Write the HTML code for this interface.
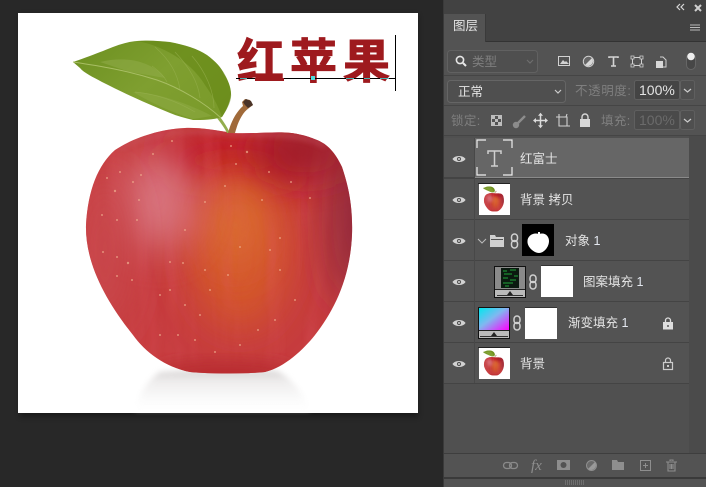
<!DOCTYPE html>
<html><head><meta charset="utf-8"><style>
html,body{margin:0;padding:0;background:#282828;width:706px;height:487px;overflow:hidden}
svg{display:block}
.t{font-family:"Liberation Sans","WenQuanYi Zen Hei","Noto Sans CJK SC",sans-serif;font-size:12.5px;fill:#e4e4e4}
.d{fill:#7f7f7f}
.dim{fill:none;stroke:#8a8a8a;stroke-width:1.3}
</style></head><body>
<svg width="706" height="487" viewBox="0 0 706 487" xmlns="http://www.w3.org/2000/svg">
<defs>
<clipPath id="ac"><path d="M232 133C215 130 200 127.500 185 128C160 129 133 138 115 150C98 165 88 190 86 225C85 262 105 300 133 335C145 352 165 367 190 372C210 374 245 374 265 372C285 367 303 350 315 335C333 312 350 280 352 235C353 205 348 185 342 167C335 152 327 144 317 140C305 135 295 133 285 132.500C265 132 250 134 232 133Z"/></clipPath>
<filter id="b6" x="-30%" y="-30%" width="160%" height="160%"><feGaussianBlur stdDeviation="7"/></filter>
<filter id="b14" x="-80%" y="-80%" width="260%" height="260%"><feGaussianBlur stdDeviation="20"/></filter>
<filter id="b3" x="-30%" y="-30%" width="160%" height="160%"><feGaussianBlur stdDeviation="3"/></filter>
<filter id="st" x="0" y="0" width="100%" height="100%"><feTurbulence type="fractalNoise" baseFrequency="0.06 0.008" numOctaves="3" seed="5"/><feColorMatrix values="0 0 0 0 .74  0 0 0 0 .1  0 0 0 0 .13  1.6 0 0 0 -.62"/><feGaussianBlur stdDeviation="1"/></filter>
<linearGradient id="lf" x1="0" y1="0.2" x2="1" y2="0.8"><stop offset="0" stop-color="#6f9222"/><stop offset=".5" stop-color="#7f9f30"/><stop offset="1" stop-color="#7a9a2a"/></linearGradient>
<linearGradient id="gr" x1="0" y1="0" x2="1" y2="1"><stop offset="0" stop-color="#00e8ee"/><stop offset=".45" stop-color="#80b8f0"/><stop offset="1" stop-color="#ff00ff"/></linearGradient>
<linearGradient id="sh" x1="0" y1="0" x2="0" y2="1"><stop offset="0" stop-color="#c4c0c0"/><stop offset=".3" stop-color="#e8e6e6"/><stop offset=".75" stop-color="#fafafa"/><stop offset="1" stop-color="#fff"/></linearGradient>
<g id="apple">
<path d="M232 133C215 130 200 127.500 185 128C160 129 133 138 115 150C98 165 88 190 86 225C85 262 105 300 133 335C145 352 165 367 190 372C210 374 245 374 265 372C285 367 303 350 315 335C333 312 350 280 352 235C353 205 348 185 342 167C335 152 327 144 317 140C305 135 295 133 285 132.500C265 132 250 134 232 133Z" fill="#c63c3e"/>
<g clip-path="url(#ac)">
<ellipse cx="235" cy="160" rx="85" ry="26" fill="#bd1420" filter="url(#b14)"/>
<ellipse cx="240" cy="250" rx="50" ry="80" fill="#d4562a" filter="url(#b14)"/>
<ellipse cx="235" cy="225" rx="24" ry="40" fill="#dc7030" filter="url(#b14)"/>
<rect x="80" y="125" width="280" height="250" filter="url(#st)" opacity=".4"/>
<ellipse cx="158" cy="200" rx="36" ry="50" fill="#dc818c" filter="url(#b14)" opacity=".85"/>
<ellipse cx="105" cy="250" rx="22" ry="80" fill="#c9484d" filter="url(#b14)"/>
<ellipse cx="352" cy="215" rx="20" ry="90" fill="#862838" filter="url(#b14)"/>
<ellipse cx="305" cy="150" rx="50" ry="24" fill="#9a1c2a" filter="url(#b14)"/>
<path d="M120 148C150 132 195 128 232 134C262 135 300 132 325 146" fill="none" stroke="#c8606a" stroke-width="3" opacity=".6" filter="url(#b3)"/>
<ellipse cx="225" cy="372" rx="70" ry="12" fill="#ba2e30" filter="url(#b6)"/>
<g fill="#f0b090" opacity=".7">
<circle cx="172" cy="141" r="1"/><circle cx="153" cy="154" r="1"/><circle cx="247" cy="152" r="1.200"/><circle cx="231" cy="146" r="1"/><circle cx="236" cy="164" r="1"/><circle cx="225" cy="186" r="1"/><circle cx="205" cy="202" r="1"/><circle cx="269" cy="172" r="1"/><circle cx="291" cy="182" r="1"/><circle cx="120" cy="172" r="1"/><circle cx="133" cy="182" r="1"/><circle cx="107" cy="178" r="1"/><circle cx="115" cy="191" r="1.200"/><circle cx="141" cy="175" r="1"/><circle cx="139" cy="200" r="1"/><circle cx="102" cy="215" r="1"/><circle cx="117" cy="220" r="1"/><circle cx="137" cy="220" r="1"/><circle cx="103" cy="252" r="1"/><circle cx="117" cy="257" r="1"/><circle cx="128" cy="263" r="1.200"/><circle cx="117" cy="276" r="1"/><circle cx="132" cy="280" r="1"/><circle cx="160" cy="295" r="1"/><circle cx="170" cy="290" r="1"/><circle cx="185" cy="305" r="1"/><circle cx="200" cy="315" r="1"/><circle cx="160" cy="335" r="1"/><circle cx="178" cy="335" r="1"/><circle cx="195" cy="340" r="1"/><circle cx="215" cy="352" r="1"/><circle cx="240" cy="345" r="1"/><circle cx="258" cy="330" r="1"/><circle cx="275" cy="320" r="1"/><circle cx="295" cy="300" r="1"/><circle cx="280" cy="270" r="1"/><circle cx="270" cy="250" r="1"/><circle cx="280" cy="238" r="1"/><circle cx="240" cy="247" r="1"/><circle cx="210" cy="290" r="1"/><circle cx="205" cy="270" r="1"/><circle cx="228" cy="275" r="1"/><circle cx="310" cy="198" r="1"/><circle cx="262" cy="200" r="1"/><circle cx="183" cy="263" r="1"/><circle cx="170" cy="262" r="1"/><circle cx="185" cy="230" r="1"/>
</g>
</g>
<path d="M220 117C224 122 227 127 230 133L227 133C224 127 220 122 217 118Z" fill="#93ad4e"/>
<path d="M228 133C231 122 236 112 243 106L242 102L245 99L250 100L253 105L249 108C242 113 238 122 235 133Z" fill="#a06a3a"/>
<path d="M243 102L246 99L251 101L253 105L248 108L245 105Z" fill="#4a3428"/>
<path d="M73 62C85 58 95 54 103 51C115 46 125 42 137 41C150 40 160 41 170 42C185 45 198 49 207 55C216 62 221 67 224 74C228 80 231 87 231 94C230 103 226 111 222 117C213 120 203 120 193 120C185 118 177 116 170 113C158 108 146 103 133 97C122 92 112 87 102 82C93 77 84 73 80 68Z" fill="url(#lf)"/>
<path d="M137 41C160 45 190 60 205 85C212 95 218 105 222 117C228 108 232 100 231 93C230 85 226 75 222 70C215 60 205 52 190 47C175 42 155 40 137 41Z" fill="#628512" opacity=".55"/>
<path d="M100 62C125 56 150 60 165 78L130 72Z" fill="#8fab48" opacity=".55"/>
<path d="M133 92C155 92 190 104 212 116L193 119C170 112 150 102 133 92Z" fill="#8fac46" opacity=".5"/>
<path d="M73 62C100 66 125 70 157 80C180 88 205 103 221 118" fill="none" stroke="#a8be64" stroke-width="1"/>
<path d="M152 66C160 72 164 76 167 82M180 90C178 75 170 60 155 47M200 98C198 82 190 68 175 52M214 108C214 92 206 72 192 56M135 92C155 94 175 100 195 112" fill="none" stroke="#9ab252" stroke-width=".7" opacity=".6"/>
</g>
</defs>

<rect width="706" height="487" fill="#282828"/>
<rect x="20" y="15" width="398" height="402" fill="#000" opacity=".35" filter="url(#b3)"/>
<rect x="18" y="13" width="400" height="400" fill="#fff"/>
<path d="M160 372C195 369 250 369 277 371C292 378 304 395 310 410L135 410C140 392 148 380 160 372Z" fill="url(#sh)" filter="url(#b3)" opacity=".7"/>
<use href="#apple"/>
<text x="237" y="78" font-family="'Noto Sans CJK SC','WenQuanYi Zen Hei',sans-serif" font-weight="700" font-size="47" letter-spacing="6" fill="#9e1a1e" stroke="#9e1a1e" stroke-width="1">红苹果</text>
<rect x="236" y="78" width="160" height="1" fill="#000"/>
<rect x="395" y="35" width="1" height="56" fill="#000"/>
<path d="M240 78h7M346 78h8M364 78h6M380 78h9" stroke="#5fe0e0" stroke-width="1" opacity=".8" transform="translate(0 .5)"/>
<rect x="255" y="78" width="29" height="3" fill="#9e1a1e"/>
<rect x="311" y="76" width="4" height="4" fill="#4fdcdc"/>

<rect x="443" y="0" width="263" height="487" fill="#535353"/>
<rect x="443" y="0" width="1" height="487" fill="#3a3a3a"/>
<rect x="444" y="0" width="262" height="14" fill="#424242"/>
<path d="M680 4l-3 3 3 3M684 4l-3 3 3 3" fill="none" stroke="#d8d8d8" stroke-width="1.200"/>
<path d="M695 5l6 6M701 5l-6 6" stroke="#cfcfcf" stroke-width="2"/>
<rect x="444" y="14" width="262" height="28" fill="#424242"/>
<rect x="444" y="14" width="41" height="28" fill="#535353"/>
<rect x="485" y="41" width="221" height="1" fill="#333"/>
<rect x="485" y="14" width="1" height="28" fill="#3a3a3a"/>
<text x="453" y="30" class="t">图层</text>
<path d="M690 25h10M690 27.500h10M690 30h10" stroke="#bbb" stroke-width="1"/>

<rect x="447.500" y="50.500" width="90" height="22" rx="3" fill="#4f4f4f" stroke="#616161"/>
<circle cx="460" cy="60" r="3.600" fill="none" stroke="#e6e6e6" stroke-width="1.600"/><path d="M463 63l3 3" stroke="#e6e6e6" stroke-width="2"/>
<text x="472" y="66" class="t d">类型</text>
<path d="M527 60l3 3 3-3" fill="none" stroke="#6e6e6e" stroke-width="1.200"/>
<rect x="558.500" y="56.500" width="11" height="9" fill="none" stroke="#d2d2d2"/><path d="M560 64l3-4 2 2 1-1 3 3z" fill="#d2d2d2"/>
<circle cx="588.500" cy="61.500" r="5.200" fill="#666" stroke="#d0d0d0"/><path d="M592 58A5 5 0 0 1 585 65Z" fill="#d8d8d8"/>
<path d="M609 58v-1h9v1M613.500 57v9M611 66h5" fill="none" stroke="#d4d4d4" stroke-width="1.600"/>
<rect x="632.500" y="57.500" width="9" height="8" fill="none" stroke="#d0d0d0"/>
<path d="M631 56h3v3h-3zM640 56h3v3h-3zM631 64h3v3h-3zM640 64h3v3h-3z" fill="#535353" stroke="#d0d0d0" stroke-width=".8"/>
<path d="M660 57h3l3 3v7h-5" fill="none" stroke="#d0d0d0"/><rect x="656" y="61" width="7" height="7" fill="#d8d8d8"/>
<rect x="686.500" y="53.500" width="9" height="16" rx="4.500" fill="#474747" stroke="#666"/>
<circle cx="691" cy="56.500" r="3.800" fill="#eee"/>
<rect x="444" y="75" width="262" height="1" fill="#454545"/>

<rect x="447.500" y="80.500" width="118" height="22" rx="3" fill="#4f4f4f" stroke="#656565"/>
<text x="458" y="96" class="t">正常</text>
<path d="M555 90l3 3 3-3" fill="none" stroke="#ccc" stroke-width="1.200"/>
<text x="575" y="95" class="t d" letter-spacing=".6">不透明度:</text>
<rect x="634.500" y="80.500" width="45" height="19" rx="2" fill="#444" stroke="#5f5f5f"/>
<text x="639" y="95" class="t" style="font-size:14px">100%</text>
<rect x="680.500" y="80.500" width="14" height="19" rx="2" fill="#4f4f4f" stroke="#5f5f5f"/>
<path d="M684 89l3.500 3 3.500-3" fill="none" stroke="#ccc" stroke-width="1.200"/>
<rect x="444" y="105" width="262" height="1" fill="#454545"/>

<text x="451" y="125" class="t d" letter-spacing=".4">锁定:</text>
<rect x="491.500" y="115.500" width="10" height="10" fill="none" stroke="#bdbdbd"/><path d="M492 116h3v3h-3zM498 116h3v3h-3zM495 119h3v3h-3zM492 122h3v3h-3zM498 122h3v3h-3z" fill="#bdbdbd"/>
<path d="M525 116l-7 7" stroke="#8c8c8c" stroke-width="2.400"/><circle cx="516" cy="125" r="3.200" fill="#8c8c8c"/>
<path d="M534 120.500h13M540.500 114v13" stroke="#dcdcdc" stroke-width="1.500"/><path d="M540.500 112.800l-2.500 3h5zM540.500 128.200l-2.500-3h5zM533 120.500l3-2.500v5zM548 120.500l-3-2.500v5z" fill="#dcdcdc"/>
<path d="M556 117h11v9M559 114v12h11M567 114l-1 3" fill="none" stroke="#d0d0d0" stroke-width="1.100"/>
<path d="M582 119v-2a3 3 0 0 1 6 0v2" fill="none" stroke="#d8d8d8" stroke-width="1.400"/><rect x="580" y="119" width="10" height="8" fill="#d8d8d8"/>
<text x="601" y="125" class="t d" letter-spacing=".4">填充:</text>
<rect x="634.500" y="110.500" width="45" height="19" rx="2" fill="#4a4a4a" stroke="#5f5f5f"/>
<text x="639" y="125" class="t" style="font-size:14px;fill:#6b6b6b">100%</text>
<rect x="680.500" y="110.500" width="14" height="19" rx="2" fill="#4f4f4f" stroke="#5f5f5f"/>
<path d="M684 119l3.500 3 3.500-3" fill="none" stroke="#ccc" stroke-width="1.200"/>
<rect x="444" y="135" width="262" height="1" fill="#454545"/>

<rect x="444" y="136" width="245" height="317" fill="#505050"/>
<rect x="689" y="136" width="17" height="317" fill="#4b4b4b"/>
<rect x="444" y="177" width="245" height="2" fill="#444"/>
<g fill="#444">
<rect x="444" y="219" width="245" height="1"/><rect x="444" y="260" width="245" height="1"/><rect x="444" y="301" width="245" height="1"/><rect x="444" y="342" width="245" height="1"/><rect x="444" y="383" width="245" height="1"/>
</g>
<rect x="444" y="138" width="30" height="39" fill="#535353"/>
<rect x="474" y="138" width="215" height="39" fill="#666"/>
<rect x="474" y="177" width="215" height="1" fill="#8a8a8a"/>
<rect x="444" y="179" width="245" height="40" fill="#535353"/><rect x="444" y="220" width="245" height="40" fill="#535353"/><rect x="444" y="261" width="245" height="40" fill="#535353"/><rect x="444" y="302" width="245" height="40" fill="#535353"/><rect x="444" y="343" width="245" height="40" fill="#535353"/>
<rect x="474" y="138" width="1" height="245" fill="#484848"/>

<defs><g id="eye"><path d="M-6.500 0C-4 -4 4 -4 6.500 0C4 4 -4 4 -6.500 0Z" fill="#d2d2d2"/><circle r="2.100" fill="#535353"/><circle r="1" fill="#d2d2d2"/></g>
<g id="link"><rect x="-3" y="-7" width="6" height="7.500" rx="3" fill="none" stroke="#d0d0d0" stroke-width="1.500"/><rect x="-3" y="-.5" width="6" height="7.500" rx="3" fill="none" stroke="#d0d0d0" stroke-width="1.500"/></g></defs>
<use href="#eye" x="459" y="159"/><use href="#eye" x="459" y="200"/><use href="#eye" x="459" y="241"/><use href="#eye" x="459" y="282"/><use href="#eye" x="459" y="323"/><use href="#eye" x="459" y="364"/>

<path d="M477 148v-8h9M503 140h9v8M477 167v8h9M503 175h9v-8" fill="none" stroke="#eee" stroke-width="1.200"/>
<path d="M488 154v-3h13v3M494.500 151v15M491 166h7" fill="none" stroke="#cfcfcf" stroke-width="1.500"/>
<text x="520" y="163" class="t">红富士</text>

<rect x="478" y="183" width="32" height="1" fill="#222"/><rect x="479" y="184" width="31" height="31" fill="#fff"/>
<g transform="translate(477.500 183.400) scale(.075)"><use href="#apple"/></g>
<text x="520" y="204" class="t">背景 拷贝</text>

<path d="M478 239l4 4 4-4" fill="none" stroke="#bbb" stroke-width="1"/>
<path d="M490 247v-12h5l1 2h8v10z" fill="#d0d0d0"/><rect x="491" y="239" width="12" height="1" fill="#535353"/>
<use href="#link" x="514.500" y="241"/>
<rect x="522" y="224" width="32" height="32" fill="#000"/>
<path d="M539 234C545 232 549 236 549 241C549 247 544 253 539 253C534 253 527 247 527.500 241C527.500 236 533 232 539 234Z" fill="#fff"/><rect x="538" y="232" width="2" height="3" fill="#fff"/>
<text x="565" y="245" class="t">对象 <tspan fill="#e4e8f0">1</tspan></text>

<rect x="494.500" y="266.500" width="31" height="31" fill="#8a8a8a" stroke="#111"/>
<rect x="501" y="268" width="18" height="20" fill="#0b1a10"/>
<path d="M503 271h4M510 270h6M504 274h8M514 276h4M503 278h5M510 280h6M503 283h10M505 286h4" stroke="#1fa53a" stroke-width="1"/>
<rect x="495" y="289" width="30" height="1" fill="#222"/><rect x="495" y="290" width="30" height="7" fill="#bbb"/><rect x="497" y="295" width="26" height="1" fill="#333"/><path d="M510 291l3 4h-6z" fill="#222"/>
<use href="#link" x="533" y="282"/>
<rect x="541" y="265" width="32" height="32" fill="#fff"/><rect x="541" y="265" width="32" height="1" fill="#333"/>
<text x="583" y="286" class="t">图案填充 <tspan fill="#e4e8f0">1</tspan></text>

<rect x="478.500" y="307.500" width="31" height="31" fill="#bbb" stroke="#111"/>
<rect x="479" y="308" width="30" height="22" fill="url(#gr)"/>
<rect x="479" y="330" width="30" height="1" fill="#222"/><rect x="480" y="336" width="28" height="1" fill="#333"/><path d="M494 332l3 4h-6z" fill="#222"/>
<use href="#link" x="517" y="323"/>
<rect x="525" y="307" width="32" height="32" fill="#fff"/><rect x="525" y="307" width="32" height="1" fill="#333"/>
<text x="568" y="327" class="t">渐变填充 <tspan fill="#e4e8f0">1</tspan></text>
<path d="M665.500 323v-2.500a2.500 2.500 0 0 1 5 0v2.500" fill="none" stroke="#ddd" stroke-width="1.300"/><rect x="663" y="322" width="10" height="7.500" fill="#ddd"/><rect x="667" y="325" width="2" height="2" fill="#777"/>

<rect x="478" y="347" width="32" height="1" fill="#222"/><rect x="479" y="348" width="31" height="31" fill="#fff"/>
<g transform="translate(477.500 347.400) scale(.075)"><use href="#apple"/></g>
<text x="520" y="368" class="t">背景</text>
<path d="M665.500 363v-2.500a2.500 2.500 0 0 1 5 0v2.500" fill="none" stroke="#ccc" stroke-width="1.200"/><rect x="663.500" y="362.500" width="9" height="7" fill="none" stroke="#ccc" stroke-width="1.200"/><rect x="667" y="365" width="2" height="2" fill="#ccc"/>

<rect x="444" y="384" width="245" height="69" fill="#505050"/>

<rect x="444" y="453" width="262" height="1" fill="#3e3e3e"/>
<rect x="444" y="454" width="262" height="24" fill="#535353"/>
<rect x="444" y="477" width="262" height="2" fill="#3a3a3a"/>
<g stroke="#6e6e6e"><path d="M565.500 480v5M567.500 480v5M569.500 480v5M571.500 480v5M573.500 480v5M575.500 480v5M577.500 480v5M579.500 480v5M581.500 480v5M583.500 480v5"/></g>
<rect x="503.500" y="462.500" width="8" height="6" rx="3" class="dim"/><rect x="509.500" y="462.500" width="8" height="6" rx="3" class="dim"/>
<text x="531" y="470" font-family="Liberation Serif,serif" font-style="italic" font-size="15" fill="#8e8e8e">fx</text>
<rect x="557" y="460" width="13" height="10" fill="#8e8e8e"/><circle cx="563.500" cy="465" r="3" fill="#535353"/>
<circle cx="591.500" cy="465.500" r="5" fill="#6a6a6a" stroke="#8e8e8e"/><path d="M595 462A5 5 0 0 1 588 469Z" fill="#9a9a9a"/>
<path d="M612 460h5l1 2h6v8h-12z" fill="#8e8e8e"/>
<rect x="640.500" y="460.500" width="10" height="10" fill="none" stroke="#8e8e8e"/><path d="M645.500 463v5M643 465.500h5" stroke="#8e8e8e"/>
<path d="M666 462h11M668 462v9h7v-9M670 461v-1h3v1M670 464v5M671.500 464v5M673 464v5" fill="none" stroke="#8e8e8e" stroke-width="1.100"/>
</svg>
</body></html>
